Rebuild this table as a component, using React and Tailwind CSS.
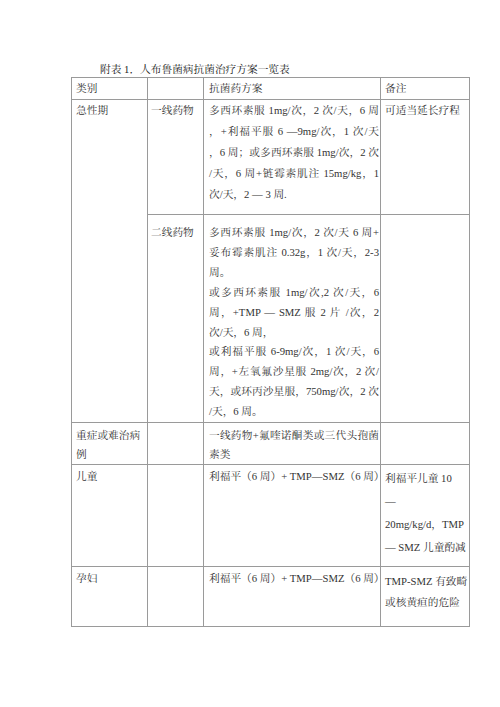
import React from "react";

const J = ({ children }) => (
  <div className="text-justify [text-align-last:justify]">{children}</div>
);
const L = ({ children }) => <div>{children}</div>;

export default function App() {
  const td = "border border-[#9a9a9a] align-top p-0";
  return (
    <div
      className="w-[500px] h-[707px] bg-white text-[#333] text-[10.7px] leading-[21px]"
      style={{ fontFamily: '"Liberation Serif", "Noto Serif CJK SC", "Noto Sans CJK SC", serif' }}
    >
      <div className="pt-[61px] pl-[100px] h-[77px] leading-[17px] text-[#222]">
        附表 1．人布鲁菌病抗菌治疗方案一览表
      </div>
      <table className="ml-[71px] w-[398px] border-collapse table-fixed">
        <colgroup>
          <col className="w-[76px]" />
          <col className="w-[56px]" />
          <col className="w-[177px]" />
          <col className="w-[89px]" />
        </colgroup>
        <tbody>
          <tr className="h-[21px]">
            <td className={`${td} pl-[4px]`}>类别</td>
            <td className={td}></td>
            <td className={`${td} pl-[5px]`}>抗菌药方案</td>
            <td className={`${td} pl-[4px]`}>备注</td>
          </tr>
          <tr className="h-[115px]">
            <td className={`${td} pl-[4px]`} rowSpan={2}>急性期</td>
            <td className={`${td} pl-[3px]`}>一线药物</td>
            <td className={`${td} pl-[5px] pr-[1px]`}>
              <J>多西环素服 1mg/次，2 次/天，6 周</J>
              <J>，+利福平服 6 —9mg/次，1 次/天</J>
              <J>，6 周；或多西环素服 1mg/次，2 次</J>
              <J>/天，6 周+链霉素肌注 15mg/kg，1</J>
              <L>次/天，2 — 3 周.</L>
            </td>
            <td className={`${td} pl-[4px]`}>可适当延长疗程</td>
          </tr>
          <tr className="h-[207px]">
            <td className={`${td} pl-[3px] pt-[8px] leading-[19.9px]`}>二线药物</td>
            <td className={`${td} pl-[5px] pr-[1px] pt-[8px] leading-[19.9px]`}>
              <J>多西环素服 1mg/次，2 次/天 6 周+</J>
              <J>妥布霉素肌注 0.32g，1 次/天，2-3</J>
              <L>周。</L>
              <J>或多西环素服 1mg/次,2 次/天，6</J>
              <J>周，+TMP — SMZ 服 2 片 /次，2</J>
              <L>次/天，6 周，</L>
              <J>或利福平服 6-9mg/次，1 次/天，6</J>
              <J>周，+左氧氟沙星服 2mg/次，2 次/</J>
              <J>天，或环丙沙星服，750mg/次，2 次</J>
              <L>/天，6 周。</L>
            </td>
            <td className={td}></td>
          </tr>
          <tr className="h-[41px]">
            <td className={`${td} pl-[4px] pt-[3px] leading-[19px]`}>
              <div>重症或难治病</div>
              <div>例</div>
            </td>
            <td className={td}></td>
            <td className={`${td} pl-[5px] pr-[1px] pt-[3px] leading-[19px]`}>
              <J>一线药物+氟喹诺酮类或三代头孢菌</J>
              <L>素类</L>
            </td>
            <td className={td}></td>
          </tr>
          <tr className="h-[102px]">
            <td className={`${td} pl-[4px] pt-[1px]`}>儿童</td>
            <td className={td}></td>
            <td className={`${td} pl-[5px] pt-[1px]`}>利福平（6 周）+ TMP—SMZ（6 周）</td>
            <td className={`${td} pl-[4px] pt-[2px] leading-[23px]`}>
              <div>利福平儿童 10</div>
              <div>—</div>
              <div>20mg/kg/d，TMP</div>
              <div>— SMZ 儿童酌减</div>
            </td>
          </tr>
          <tr className="h-[60px]">
            <td className={`${td} pl-[4px] pt-[1px]`}>孕妇</td>
            <td className={td}></td>
            <td className={`${td} pl-[5px] pt-[1px]`}>利福平（6 周）+ TMP—SMZ（6 周）</td>
            <td className={`${td} pl-[4px] pt-[4px]`}>
              <div>TMP-SMZ 有致畸</div>
              <div>或核黄疸的危险</div>
            </td>
          </tr>
        </tbody>
      </table>
    </div>
  );
}
